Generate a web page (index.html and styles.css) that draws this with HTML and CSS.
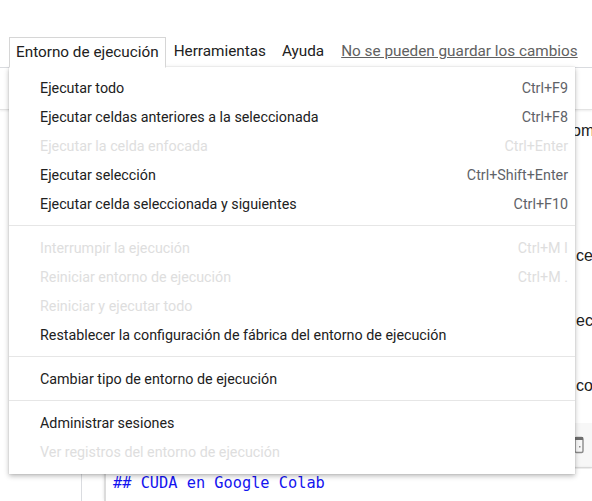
FILE: index.html
```html
<!DOCTYPE html>
<html lang="es">
<head>
<meta charset="utf-8">
<title>Colab</title>
<link rel="stylesheet" href="styles.css">
</head>
<body>
<div class="app">
  <nav class="menubar">
    <div class="mitem active">Entorno de ejecución</div>
    <div class="mitem">Herramientas</div>
    <div class="mitem">Ayuda</div>
    <a class="unsaved">No se pueden guardar los cambios</a>
  </nav>
  <div class="toolbar"></div>
  <div class="main">
    <aside class="side"></aside>
    <section class="nb">
      <p class="tline l1">omo</p>
      <p class="tline l2">ce</p>
      <p class="tline l3">ec</p>
      <p class="tline l4">co</p>
      <div class="cellbar">
        <svg class="cb-icon" width="10" height="18" viewBox="0 0 10 18"><rect x="1" y="1.5" width="8" height="15" rx="1.5" fill="none" stroke="#8a8a8a" stroke-width="1.4"/><rect x="1" y="1" width="8" height="3" fill="#6e6e6e"/><rect x="5" y="10" width="1.5" height="1.5" fill="#8a8a8a"/></svg>
      </div>
      <div class="code">## CUDA en Google Colab</div>
    </section>
  </div>

  <div class="dropdown">
    <div class="ditem"><span>Ejecutar todo</span><span class="kbd">Ctrl+F9</span></div>
    <div class="ditem"><span>Ejecutar celdas anteriores a la seleccionada</span><span class="kbd">Ctrl+F8</span></div>
    <div class="ditem off"><span>Ejecutar la celda enfocada</span><span class="kbd">Ctrl+Enter</span></div>
    <div class="ditem"><span>Ejecutar selección</span><span class="kbd">Ctrl+Shift+Enter</span></div>
    <div class="ditem"><span>Ejecutar celda seleccionada y siguientes</span><span class="kbd">Ctrl+F10</span></div>
    <div class="sep"></div>
    <div class="ditem off"><span>Interrumpir la ejecución</span><span class="kbd">Ctrl+M I</span></div>
    <div class="ditem off"><span>Reiniciar entorno de ejecución</span><span class="kbd">Ctrl+M .</span></div>
    <div class="ditem off"><span>Reiniciar y ejecutar todo</span></div>
    <div class="ditem"><span>Restablecer la configuración de fábrica del entorno de ejecución</span></div>
    <div class="sep"></div>
    <div class="ditem"><span>Cambiar tipo de entorno de ejecución</span></div>
    <div class="sep"></div>
    <div class="ditem"><span>Administrar sesiones</span></div>
    <div class="ditem off"><span>Ver registros del entorno de ejecución</span></div>
  </div>
</div>
</body>
</html>
```

FILE: styles.css
```css
* { box-sizing: border-box; }
html, body { margin: 0; padding: 0; background: #fff; }
body {
  font-family: Roboto, "Liberation Sans", sans-serif;
  color: #212121;
  width: 592px;
  height: 501px;
  overflow: hidden;
}
.app {
  position: relative;
  width: 592px;
  height: 501px;
  overflow: hidden;
  display: flex;
  flex-direction: column;
}
.menubar {
  display: flex;
  align-items: stretch;
  padding-top: 37px;
  height: 68px;
  border-bottom: 1px solid #dadce0;
  font-size: 15.3px;
  flex: 0 0 auto;
}
.mitem {
  padding: 0 8px;
  line-height: 29px;
  white-space: nowrap;
}
.mitem.active {
  margin-left: 9px;
  padding: 0 6px;
  border: 1px solid #d6d6d6;
  border-bottom: 1px solid #fff;
  margin-bottom: -1px;
  background: #fff;
  position: relative;
  z-index: 3;
}
.unsaved {
  margin-left: 9px;
  line-height: 29px;
  color: #616161;
  text-decoration: underline;
  white-space: nowrap;
}
.toolbar {
  height: 42px;
  border-bottom: 1px solid #e3e3e3;
  box-shadow: 0 1px 2px rgba(0,0,0,0.08);
  flex: 0 0 auto;
}
.main {
  flex: 1;
  display: flex;
}
.side {
  width: 82px;
  border-right: 1px solid #dadce0;
  flex: 0 0 auto;
}
.nb {
  flex: 1;
  padding-left: 22px;
  display: flex;
  flex-direction: column;
  min-width: 0;
}
.tline {
  margin: 0;
  height: 18px;
  line-height: 18px;
  font-family: "Liberation Sans", Arial, sans-serif;
  font-size: 16px;
  color: #202020;
  padding-left: 472px;
  white-space: nowrap;
}
.l1 { margin-top: 12px; padding-left: 468px; }
.l2 { margin-top: 107px; }
.l3 { margin-top: 47px; }
.l4 { margin-top: 47px; }
.cellbar {
  margin-top: 28px;
  height: 45px;
  background: #f7f7f7;
  border-bottom: 1px solid #e2e2e2;
  display: flex;
  align-items: center;
  padding-left: 470px;
}
.code {
  margin-top: 1px;
  flex: 1;
  border-left: 2px solid #dcdcdc;
  box-shadow: 0 -1px 3px rgba(0,0,0,0.12);
  padding: 5px 0 0 7px;
  font-family: "DejaVu Sans Mono", monospace;
  font-size: 15.3px;
  color: #1414f0;
  white-space: nowrap;
}
.dropdown {
  position: absolute;
  left: 9px;
  top: 67px;
  width: 566px;
  height: 407px;
  background: #fff;
  padding: 6px 0 8px;
  box-shadow: 0 2px 5px rgba(0,0,0,0.28), 0 0 1px rgba(0,0,0,0.2);
  z-index: 2;
  font-size: 14.3px;
}
.ditem {
  height: 29px;
  display: flex;
  align-items: center;
  justify-content: space-between;
  padding: 0 7px 0 31px;
  color: #212121;
  white-space: nowrap;
}
.kbd { color: #5f6368; }
.ditem.off, .ditem.off .kbd { color: #dedede; }
.sep {
  height: 15px;
  display: flex;
  align-items: center;
}
.sep::before {
  content: "";
  flex: 1;
  height: 1px;
  background: #e6e6e6;
}
```
